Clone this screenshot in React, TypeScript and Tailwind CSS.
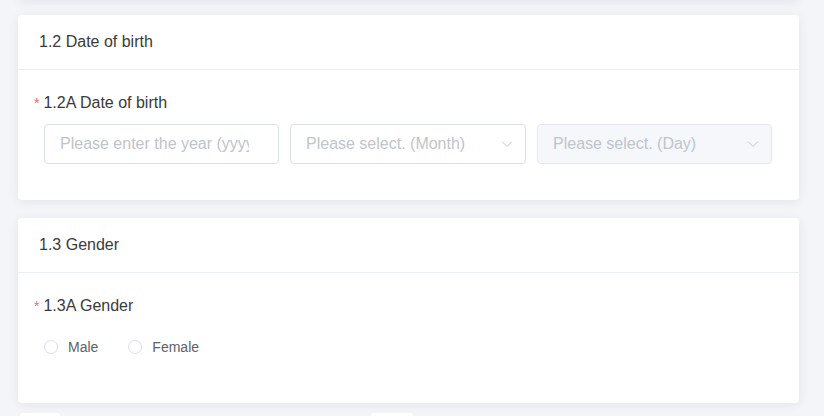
import React from "react";

const font = { fontFamily: '"Liberation Sans", Arial, sans-serif' };

function Chevron() {
  return (
    <svg width="12" height="12" viewBox="0 0 12 12" fill="none" className="shrink-0">
      <path d="M1.5 4 L6 8.5 L10.5 4" stroke="#c0c4cc" strokeWidth="1" strokeLinecap="round" strokeLinejoin="round" />
    </svg>
  );
}

function Card({ title, children }: { title: string; children: React.ReactNode }) {
  return (
    <div className="w-[781px] rounded-[4px] bg-white shadow-[0_2px_12px_rgba(0,0,40,0.07)]">
      <div className="flex h-[55px] items-center border-b border-[#ebeef5] pl-[21px] text-[16px] text-[#3a3a3a]">
        {title}
      </div>
      {children}
    </div>
  );
}

function Label({ text }: { text: string }) {
  return (
    <div className="flex h-[22px] items-center text-[16px] text-[#3a3a3a]">
      <span className="mr-[4px] text-[14px] leading-none text-[#f56c6c]">*</span>
      {text}
    </div>
  );
}

function Radio({ label }: { label: string }) {
  return (
    <label className="flex items-center gap-[10px] text-[14px] text-[#606266]">
      <span className="h-[14px] w-[14px] rounded-full border border-[#dcdfe6] bg-white" />
      {label}
    </label>
  );
}

export default function App() {
  return (
    <div className="relative h-[416px] w-[824px] overflow-hidden bg-[#f3f5f9]" style={font}>
      <div className="flex flex-col gap-[18px] pl-[18px] pt-[15px]">
        <div className="absolute left-[18px] top-[-40px] h-[40px] w-[781px] rounded-[4px] bg-white shadow-[0_2px_12px_rgba(0,0,40,0.07)]" />
        <Card title="1.2 Date of birth">
          <div className="pb-[36px] pl-[16px] pt-[22px]">
            <Label text="1.2A Date of birth" />
            <div className="mt-[10px] flex gap-[11px] pl-[10px]">
              <div className="flex h-[40px] w-[235px] items-center overflow-hidden rounded-[4px] border border-[#dcdfe6] px-[15px] text-[16px] text-[#c0c4cc] whitespace-nowrap">
                <span className="block w-[189px] overflow-hidden">Please enter the year (yyyy)</span>
              </div>
              <div className="flex h-[40px] w-[236px] items-center justify-between rounded-[4px] border border-[#dcdfe6] pl-[15px] pr-[12px] text-[16px] text-[#c0c4cc] whitespace-nowrap">
                <span>Please select. (Month)</span>
                <Chevron />
              </div>
              <div className="flex h-[40px] w-[235px] items-center justify-between rounded-[4px] border border-[#e4e7ed] bg-[#f5f7fa] pl-[15px] pr-[12px] text-[16px] text-[#c0c4cc] whitespace-nowrap">
                <span>Please select. (Day)</span>
                <Chevron />
              </div>
            </div>
          </div>
        </Card>
        <Card title="1.3 Gender">
          <div className="pb-[46px] pl-[16px] pt-[22px]">
            <Label text="1.3A Gender" />
            <div className="mt-[20px] flex h-[20px] items-center gap-[30px] pl-[10px]">
              <Radio label="Male" />
              <Radio label="Female" />
            </div>
          </div>
        </Card>
        <div className="-mt-[8px] flex h-[10px] pl-[2px]">
          <div className="h-[10px] w-[40px] rounded-t-[3px] bg-white" />
          <div className="ml-[311px] h-[10px] w-[42px] rounded-t-[3px] bg-white" />
        </div>
      </div>
    </div>
  );
}
